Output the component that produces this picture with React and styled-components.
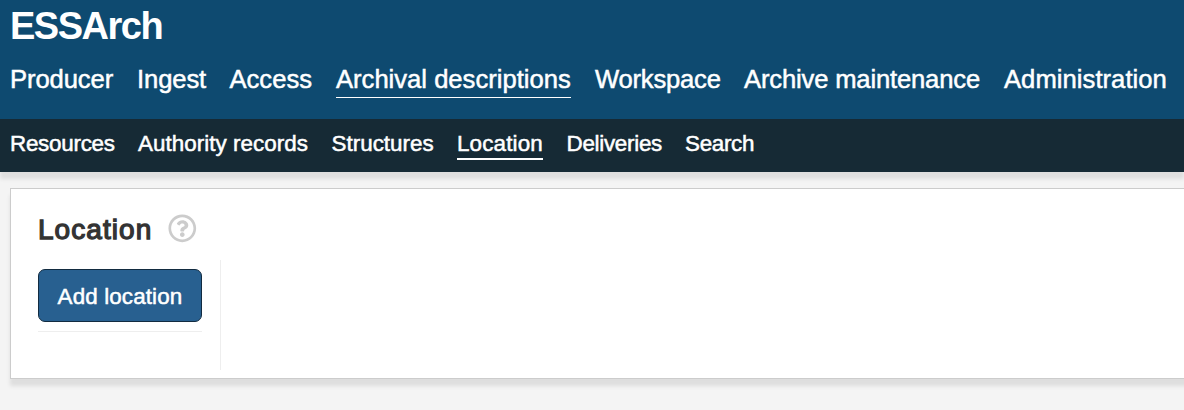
import React from "react";
import styled, { createGlobalStyle } from "styled-components";
import { FaRegQuestionCircle } from "react-icons/fa";

const GlobalStyle = createGlobalStyle`
  *, *::before, *::after { box-sizing: border-box; }
  body {
    margin: 0;
    background: #f4f4f4;
    color: #333;
    font-family: "Liberation Sans", Arial, sans-serif;
    overflow: hidden;
  }
`;

const Page = styled.div`
  height: 410px;
  overflow: hidden;
`;

const Header = styled.header`
  box-shadow: 0 7px 4px rgba(0, 0, 0, 0.09);
`;

const Masthead = styled.div`
  height: 119px;
  padding: 5px 10px 0;
  background: #0e4a70;
  color: #fff;
`;

const Brand = styled.div`
  height: 57px;
  font-size: 38px;
  font-weight: 700;
  line-height: 43px;
  letter-spacing: -1.5px;
`;

const NavList = styled.nav`
  display: flex;
  gap: 24px;
  white-space: nowrap;
`;

const BarLink = styled.a`
  flex: none;
  width: ${(p) => p.$width}px;
  letter-spacing: ${(p) => p.$tracking}px;
  color: #fff;
  -webkit-text-stroke: 0.5px #fff;
  border-bottom: 1px solid ${(p) => (p.$active ? "#fff" : "transparent")};
`;

const NavLink = styled(BarLink)`
  height: 36px;
  font-size: 25.6px;
  line-height: 34px;
`;

const SubBar = styled.div`
  height: 53px;
  padding: 9px 10px 0;
  background: #162a35;
`;

const SubLink = styled(BarLink)`
  height: 32px;
  font-size: 22.4px;
  line-height: 31px;
  border-bottom-width: 2px;
`;

const Panel = styled.main`
  height: 191px;
  margin: 16px -10px 0 10px;
  padding: 22px 27px 0;
  background: #fff;
  border: 1px solid #ccc;
  box-shadow: 0 7px 4px rgba(0, 0, 0, 0.09);
`;

const TitleRow = styled.div`
  display: flex;
  align-items: center;
  height: 35px;
`;

const Title = styled.h1`
  width: 130px;
  margin: 0;
  padding-top: 1px;
  font-size: 28px;
  font-weight: 400;
  line-height: 35px;
  letter-spacing: 1.05px;
  -webkit-text-stroke: 1.3px #333;
`;

const HelpIcon = styled(FaRegQuestionCircle)`
  width: 28.6px;
  height: 28.6px;
  color: #ccc;
`;

const Sidebar = styled.aside`
  width: 183px;
  height: 110px;
  margin-top: 14px;
  padding: 9px 18px 0 0;
  border-right: 1px solid #eee;
`;

const Actions = styled.div`
  padding-bottom: 9px;
  border-bottom: 1px solid #eee;
`;

const Button = styled.button`
  display: block;
  width: 164px;
  height: 53px;
  padding: 2px 0 0;
  border: 1px solid #122b40;
  border-radius: 7px;
  background: #286090;
  color: #fff;
  font: 22.4px "Liberation Sans", Arial, sans-serif;
  letter-spacing: 0.13px;
  -webkit-text-stroke: 0.5px #fff;
`;

const sections = [
  { label: "Producer", width: 103, tracking: -0.1 },
  { label: "Ingest", width: 68.5, tracking: -0.1 },
  { label: "Access", width: 82.5, tracking: 0 },
  { label: "Archival descriptions", width: 235, tracking: 0, active: true },
  { label: "Workspace", width: 125, tracking: -0.2 },
  { label: "Archive maintenance", width: 236, tracking: -0.16 },
  { label: "Administration", width: 164, tracking: 0.05 },
];

const views = [
  { label: "Resources", width: 104, tracking: -0.25 },
  { label: "Authority records", width: 169.5, tracking: 0.05 },
  { label: "Structures", width: 101.5, tracking: 0.02 },
  { label: "Location", width: 85.5, tracking: 0.15, active: true },
  { label: "Deliveries", width: 94.5, tracking: -0.28 },
  { label: "Search", width: 70, tracking: -0.3 },
];

export default function App() {
  return (
    <Page>
      <GlobalStyle />
      <Header>
        <Masthead>
          <Brand>ESSArch</Brand>
          <NavList>
            {sections.map((s) => (
              <NavLink key={s.label} $width={s.width} $tracking={s.tracking} $active={s.active}>
                {s.label}
              </NavLink>
            ))}
          </NavList>
        </Masthead>
        <SubBar>
          <NavList>
            {views.map((v) => (
              <SubLink key={v.label} $width={v.width} $tracking={v.tracking} $active={v.active}>
                {v.label}
              </SubLink>
            ))}
          </NavList>
        </SubBar>
      </Header>
      <Panel>
        <TitleRow>
          <Title>Location</Title>
          <HelpIcon />
        </TitleRow>
        <Sidebar>
          <Actions>
            <Button>Add location</Button>
          </Actions>
        </Sidebar>
      </Panel>
    </Page>
  );
}
